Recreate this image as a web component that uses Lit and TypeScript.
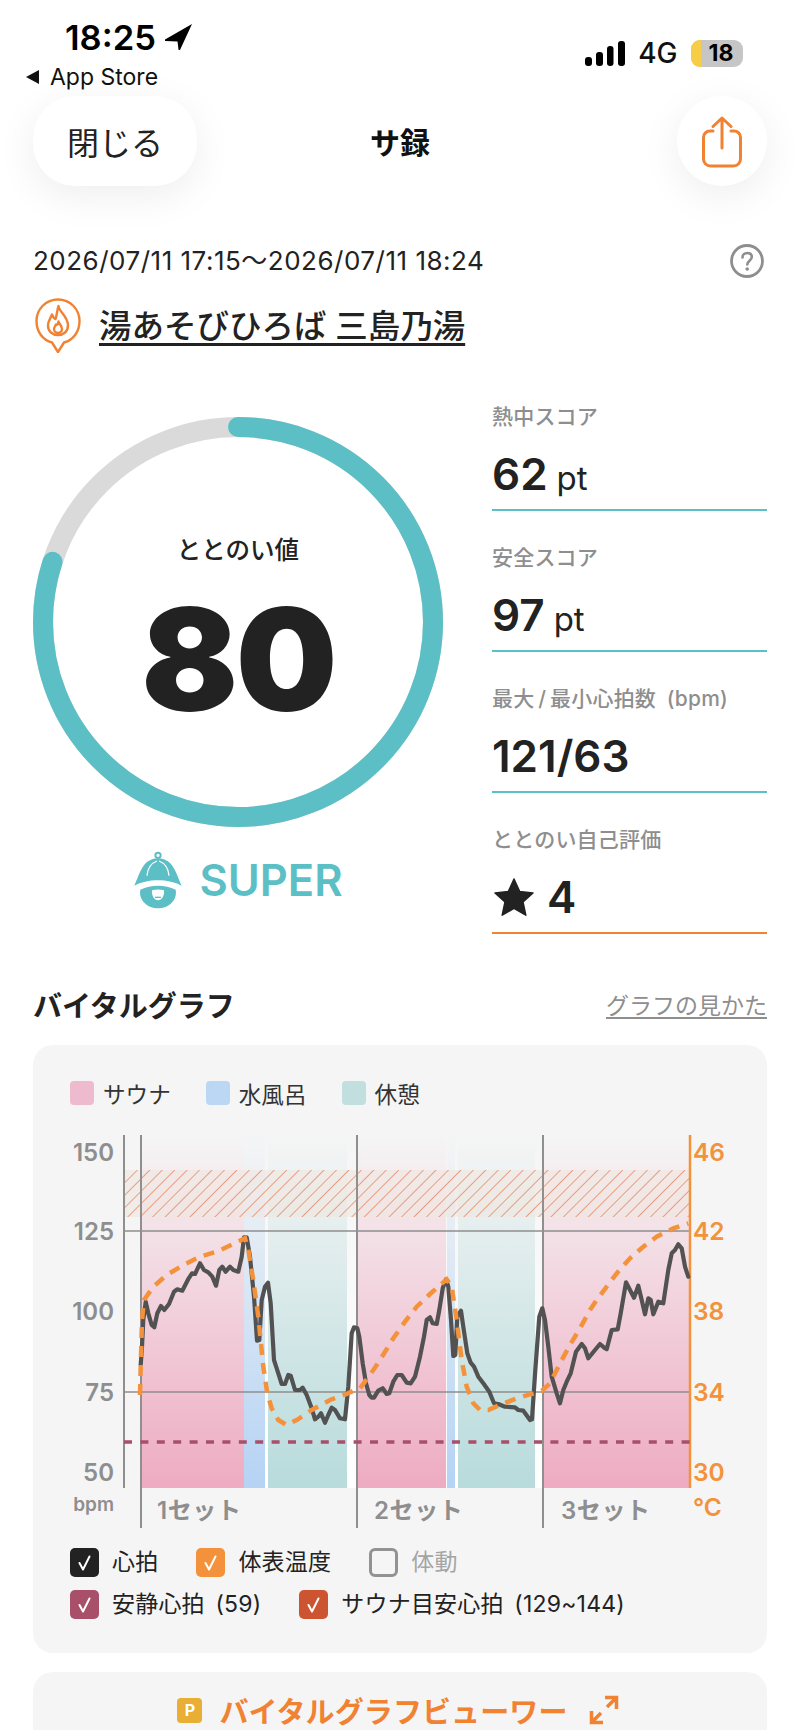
import { LitElement, html, css, svg } from 'lit';
import { customElement } from 'lit/decorators.js';

type Pt = [number, number];

// traces read from the reference, each list in its own crop coordinates
const crop = (pts: Pt[], ox: number, oy: number): Pt[] =>
  pts.map(([x, y]) => [ox + x / 3, oy + y / 3] as Pt);

const HR: Pt[] = [
  ...crop([[32,435],[36,380],[40,300],[47,245],[55,280],[65,315],[73,322],[82,280],[93,258],[103,270],[117,252],[132,215],[142,208],[157,212],[176,175],[186,160],[195,162],[210,130],[222,150],[235,157],[247,170],[258,197],[268,150],[277,140],[287,155],[300,140],[310,150],[325,155],[335,110],[342,52],[350,52],[360,110],[372,230],[381,362],[388,360],[395,240],[405,200],[414,188],[422,250],[432,420],[440,445],[455,492],[465,492],[475,465],[482,467],[495,510],[510,510],[518,503],[530,525],[545,565],[555,598],[565,590],[573,580],[585,608],[595,585],[605,563],[615,570],[630,595],[645,598],[655,500],[665,340],[672,322],[682,325]], 130, 1220),
  ...crop([[28,350],[38,430],[48,490],[58,525],[65,533],[72,533],[85,512],[98,505],[110,522],[118,520],[130,485],[142,465],[155,465],[170,488],[182,490],[195,470],[210,410],[222,350],[230,300],[240,292],[248,310],[260,312],[268,270],[278,205],[288,178],[295,200],[303,300],[310,408],[316,405],[322,290],[333,272],[340,320],[352,400],[362,428],[372,440],[385,470],[400,490],[418,515],[432,550],[445,552],[465,560],[495,562],[505,570],[520,572],[540,600],[546,598],[556,450],[568,290],[577,265],[585,300],[595,380],[605,470],[620,520],[630,550],[640,510],[650,485],[662,460],[678,395],[695,372],[705,385],[715,415]], 350, 1220),
  ...crop([[765,690],[780,672],[795,685],[800,688],[815,630],[833,628],[842,580],[858,487],[870,510],[882,533],[895,497],[905,540],[915,583],[925,535],[932,540],[940,583],[955,545],[970,550],[985,450],[995,400],[1005,390],[1015,373],[1025,385],[1035,440],[1045,470]], 340, 1120),
];

const TEMP: Pt[] = [
  ...crop([[30,525],[32,440],[36,300],[42,240],[70,200],[110,165],[160,135],[210,110],[260,95],[310,72],[345,55],[355,90],[370,180],[385,290],[400,440],[412,520],[425,565],[445,600],[470,615],[500,600],[545,570],[600,540],[650,522]], 130, 1220),
  ...crop([[0,517],[30,505],[60,465],[90,420],[130,355],[165,305],[200,260],[240,222],[290,178],[305,200],[320,300],[335,420],[350,500],[370,550],[390,570],[415,570],[450,555],[500,535],[575,513],[600,490],[630,430],[660,375],[690,325],[720,270]], 350, 1220),
  ...crop([[770,540],[800,500],[830,460],[870,415],[910,380],[950,350],[1000,325],[1045,310]], 340, 1120),
];

const line = (pts: Pt[]) => pts.map(([x, y]) => `${x.toFixed(1)},${y.toFixed(1)}`).join(' ');

const BANDS = [
  { fill: 'url(#sauna)', x: 141, w: 103 },
  { fill: 'url(#water)', x: 244, w: 21 },
  { fill: 'url(#gap)', x: 265, w: 3 },
  { fill: 'url(#rest)', x: 268, w: 79 },
  { fill: 'url(#gap)', x: 347, w: 11 },
  { fill: 'url(#sauna)', x: 358, w: 88 },
  { fill: 'url(#gap)', x: 446, w: 1 },
  { fill: 'url(#water)', x: 447, w: 8 },
  { fill: 'url(#gap)', x: 455, w: 3 },
  { fill: 'url(#rest)', x: 458, w: 77 },
  { fill: 'url(#gap)', x: 535, w: 9 },
  { fill: 'url(#sauna)', x: 544, w: 146 },
];

const STATS = [
  { label: '熱中スコア', value: '62', unit: 'pt' },
  { label: '安全スコア', value: '97', unit: 'pt' },
  { label: '最大\u2009/\u2009最小心拍数 (bpm)', value: '121/63', unit: '' },
];

@customElement('app-root')
export class AppRoot extends LitElement {
  static styles = css`
    :host {
      display: block;
      width: 800px;
      height: 1730px;
      overflow: hidden;
      background: #fff;
      color: #222;
      font-family: Inter, 'Noto Sans CJK JP', sans-serif;
    }
    svg { display: block; }

    .status { display: flex; justify-content: space-between; height: 96px; }
    .status-left { padding: 20px 0 0 25px; }
    .time { display: flex; align-items: center; gap: 9px; margin-left: 40px; height: 34px; font-size: 34.500px; font-weight: 600; color: #000; }
    .back { display: flex; align-items: center; gap: 10px; margin-top: 10px; height: 26px; font-size: 23px; color: #111; }
    .status-right { display: flex; align-items: center; gap: 13.500px; height: 28px; margin: 39px 57px 0 0; }
    .net { font-size: 28px; font-weight: 500; color: #111; }
    .battery { position: relative; display: flex; width: 52px; height: 27px; border-radius: 9px; background: #c6c6c6; overflow: hidden; align-items: center; justify-content: center; font-size: 23px; font-weight: 700; color: #000; }
    .battery-fill { position: absolute; left: 0; top: 0; bottom: 0; width: 10px; background: #f8cd46; }
    .battery span { position: relative; margin-left: 8px; }

    .nav { display: grid; grid-template-columns: 164px 1fr 164px; align-items: center; height: 90px; padding: 0 33px; }
    .close { height: 90px; border-radius: 42px; background: #fff; box-shadow: 0 10px 40px rgba(0, 0, 0, .07); display: flex; align-items: center; justify-content: center; font-size: 32px; color: #222; }
    .nav-title { text-align: center; font-size: 30px; font-weight: 700; color: #111; }
    .share { justify-self: end; width: 90px; height: 90px; border-radius: 50%; background: #fff; box-shadow: 0 10px 40px rgba(0, 0, 0, .07); display: flex; align-items: center; justify-content: center; padding-top: 2px; box-sizing: border-box; }

    .date { display: flex; align-items: center; justify-content: space-between; height: 32px; margin-top: 59px; padding: 0 36px 0 33px; font-size: 26px; letter-spacing: .5px; color: #222; }
    .date-text { margin-top: -5px; }
    .place { display: flex; align-items: center; gap: 18px; height: 55px; margin-top: 21px; padding-left: 35px; }
    .place-name { font-size: 32.500px; font-weight: 500; color: #222; text-decoration: underline; text-decoration-thickness: 3px; text-underline-offset: 5px; margin-top: -4px; }

    .score { display: grid; grid-template-columns: 410px 275px; column-gap: 49px; margin-top: 17px; padding-left: 33px; }
    .ring-col { padding-top: 47px; }
    .ring { display: grid; width: 410px; height: 410px; }
    .ring > * { grid-area: 1 / 1; }
    .ring-text { display: flex; flex-direction: column; align-items: center; justify-content: center; padding-top: 3px; box-sizing: border-box; }
    .ring-label { font-size: 24.500px; font-weight: 500; line-height: 34px; }
    .ring-value { font-size: 143px; font-weight: 900; line-height: 110px; margin-top: 37px; letter-spacing: -2.500px; }
    .level { display: flex; align-items: center; justify-content: center; gap: 14px; margin-top: 24px; margin-left: -2px; color: #5cbfc6; font-size: 43.500px; font-weight: 600; line-height: 57px; }

    .stat { height: 141px; box-sizing: border-box; padding-top: 33px; border-bottom: 2px solid #5cc0c8; }
    .stat.orange { border-bottom-color: #f08232; }
    .stat-label { font-size: 21px; font-weight: 500; line-height: 28px; color: #8e8e8e; letter-spacing: .2px; word-spacing: 5px; }
    .stat-value { display: flex; align-items: baseline; gap: 9px; height: 56px; line-height: 56px; margin-top: 15px; font-size: 44px; font-weight: 600; color: #222; }
    .stat-unit { font-size: 33px; font-weight: 400; }
    .star-row { display: flex; align-items: center; gap: 13px; padding-left: 2px; }

    .section { display: flex; align-items: center; justify-content: space-between; height: 40px; margin-top: 50px; padding: 0 33px; }
    .section-title { font-size: 29px; font-weight: 700; color: #222; }
    .section-link { font-size: 23px; color: #8e8e8e; text-decoration: underline; text-underline-offset: 3px; }

    .card { margin: 0 33px; border-radius: 20px; background: #f5f5f5; }
    .graph { margin-top: 21px; height: 608px; padding-top: 36px; box-sizing: border-box; }
    .legend { display: flex; align-items: center; height: 24px; padding-left: 37px; font-size: 22.600px; color: #333; }
    .legend-item { display: flex; align-items: center; gap: 9px; margin-right: 35px; }
    .swatch { width: 24px; height: 24px; border-radius: 4px; }
    .swatch.sauna { background: #eebacd; }
    .swatch.water { background: #bcd7f4; }
    .swatch.rest { background: #c2dfdf; }
    .chart { margin-top: 20px; }

    .axis-l { font-size: 24px; font-weight: 600; fill: #8e8e8e; text-anchor: end; }
    .axis-r { font-size: 24.500px; font-weight: 600; fill: #f4923c; }
    .unit-l { font-size: 19px; font-weight: 600; fill: #8e8e8e; text-anchor: end; }
    .set { font-size: 24px; font-weight: 600; fill: #8e8e8e; letter-spacing: .6px; }

    .checks { display: flex; flex-direction: column; gap: 13px; margin-top: 13px; padding-left: 37px; font-size: 23px; line-height: 29px; color: #222; }
    .check-row { display: flex; gap: 38px; }
    .check { display: flex; align-items: center; gap: 13px; word-spacing: 4px; letter-spacing: .2px; }
    .check.off { color: #a5a5a5; }
    .box { width: 29px; height: 29px; border-radius: 5px; box-sizing: border-box; }
    .box.black { background: #222; }
    .box.orange { background: #f4923c; }
    .box.plum { background: #a84f6a; }
    .box.rust { background: #cd5430; }
    .box.empty { border: 3px solid #929292; border-radius: 6px; }

    .viewer { display: flex; align-items: center; justify-content: center; gap: 17px; margin-top: 19px; height: 120px; padding: 0 4px 44px 0; box-sizing: border-box; color: #f08232; font-size: 29px; letter-spacing: .1px; font-weight: 600; }
    .viewer-icon { margin-left: 4px; }
    .p-badge { width: 25px; height: 25px; border-radius: 4px; background: #e8ae36; color: #fff; font-size: 16px; font-weight: 700; display: flex; align-items: center; justify-content: center; }
  `;

  private checkMark() {
    return html`<svg width="29" height="29" viewBox="0 0 29 29" fill="none"><path d="M9.500 15l3.500 6.500 6.500-13" stroke="#fff" stroke-width="2" stroke-linecap="round" stroke-linejoin="round"/></svg>`;
  }

  private renderCheck(label: string, color: string) {
    return html`<div class="check"><div class="box ${color}">${this.checkMark()}</div><span>${label}</span></div>`;
  }

  private renderMascot() {
    return html`<svg width="54" height="58" viewBox="38 34 154 174" fill="none">
      <circle cx="115" cy="47" r="8" stroke="#5cbfc6" stroke-width="6"/>
      <path d="M44 138C62 100 68 58 115 56c47 2 53 44 71 82-38-22-104-22-142 0z" fill="#5cbfc6"/>
      <path d="M82 108c2-22 14-38 30-44M148 108c-2-22-14-38-30-44" stroke="#fff" stroke-width="4"/>
      <path d="M40 146c40-24 110-24 150 0" stroke="#fff" stroke-width="5"/>
      <path d="M62 150c32-16 74-16 106 0 6 32-22 56-53 56s-59-24-53-56z" fill="#5cbfc6"/>
      <path d="M97 152c12-3 24-3 36 0 2 16-7 30-18 30s-20-14-18-30z" fill="#fff"/>
      <path d="M106 173h18" stroke="#5cbfc6" stroke-width="4"/>
    </svg>`;
  }

  private renderChart() {
    const left: [string, number][] = [['150', 1152], ['125', 1231], ['100', 1311], ['75', 1392], ['50', 1472]];
    const right: [string, number][] = [['46', 1152], ['42', 1231], ['38', 1311], ['34', 1392], ['30', 1472]];
    return html`<svg class="chart" width="734" height="410" viewBox="33 1125 734 410" fill="none">
      <defs>
        ${[['sauna', '#eeabc2'], ['water', '#b5d3f4'], ['rest', '#b8dbdc'], ['gap', '#ffffff']].map(([id, c]) => svg`
          <linearGradient id=${id} gradientUnits="userSpaceOnUse" x1="0" y1="1135" x2="0" y2="1488">
            <stop offset="0" stop-color=${c} stop-opacity="0"/>
            <stop offset="1" stop-color=${c}/>
          </linearGradient>`)}
        <pattern id="hatch" patternUnits="userSpaceOnUse" width="8.800" height="8.800" patternTransform="rotate(-45)">
          <rect width="8.800" height="8.800" fill="#f0e6e0" fill-opacity=".6"/>
          <line x1="0" y1="0" x2="8.800" y2="0" stroke="#e07a58" stroke-opacity=".75" stroke-width="1.800"/>
        </pattern>
      </defs>
      ${BANDS.map((b) => svg`<rect x=${b.x} y="1135" width=${b.w} height="353" fill=${b.fill}/>`)}
      <rect x="124" y="1170" width="566" height="47" fill="url(#hatch)"/>
      <path d="M124 1231H690M124 1392H690" stroke="#8f8f8f" stroke-width="1.500"/>
      <path d="M124 1135V1488" stroke="#8f8f8f" stroke-width="2"/>
      <path d="M141 1135V1528M357 1135V1528M543 1135V1528" stroke="#8f8f8f" stroke-width="2"/>
      <path d="M690 1135V1488" stroke="#f4923c" stroke-width="2.500"/>
      <path d="M124 1442H690" stroke="#a84f6a" stroke-width="3.500" stroke-dasharray="8 8.400"/>
      <polyline points=${line(HR)} stroke="#525252" stroke-width="4.200" stroke-linejoin="round" stroke-linecap="round"/>
      <polyline points=${line(TEMP)} stroke="#f4923c" stroke-width="4.500" stroke-dasharray="11 8"/>
      ${left.map(([t, y]) => svg`<text class="axis-l" x="114" y=${y + 9}>${t}</text>`)}
      ${right.map(([t, y]) => svg`<text class="axis-r" x="693" y=${y + 9}>${t}</text>`)}
      <text class="unit-l" x="114" y="1511">bpm</text>
      <text class="axis-r" x="693" y="1516">°C</text>
      <text class="set" x="157" y="1519">1セット</text>
      <text class="set" x="374" y="1519">2セット</text>
      <text class="set" x="561" y="1519">3セット</text>
    </svg>`;
  }

  render() {
    return html`
      <div class="status">
        <div class="status-left">
          <div class="time">
            <span>18:25</span>
            <svg width="27" height="26" viewBox="0 0 27 26"><path d="M27 0L0 15.500c-.8.6-.4 1.600.5 1.600L12.500 17.500 13.500 25.500c.2 1 1.200 1 1.600.2z" fill="#000"/></svg>
          </div>
          <div class="back">
            <svg width="15" height="14" viewBox="0 0 15 14"><path d="M14 0v14L1 7z" fill="#111"/></svg>
            <span>App Store</span>
          </div>
        </div>
        <div class="status-right">
          <svg width="40" height="25" viewBox="0 0 40 25" fill="#000">
            <rect x="0" y="16" width="7" height="9" rx="3"/>
            <rect x="11" y="11" width="7" height="14" rx="3"/>
            <rect x="22" y="5" width="6.500" height="20" rx="3"/>
            <rect x="33" y="0" width="7" height="25" rx="3"/>
          </svg>
          <span class="net">4G</span>
          <div class="battery"><div class="battery-fill"></div><span>18</span></div>
        </div>
      </div>

      <div class="nav">
        <div class="close">閉じる</div>
        <div class="nav-title">サ録</div>
        <div class="share">
          <svg width="40" height="52" viewBox="0 0 40 52" fill="none" stroke="#f08232" stroke-width="3" stroke-linecap="round" stroke-linejoin="round">
            <path d="M20 2V32M11 10.500L20 2l9 8.500"/>
            <path d="M11 15H8a6.500 6.500 0 0 0-6.500 6.500V43a7 7 0 0 0 7 7h23a7 7 0 0 0 7-7V21.500A6.500 6.500 0 0 0 32 15h-3"/>
          </svg>
        </div>
      </div>

      <div class="date">
        <span class="date-text">2026/07/11 17:15～2026/07/11 18:24</span>
        <svg width="34" height="34" viewBox="0 0 34 34" fill="none">
          <circle cx="17" cy="17" r="15.500" stroke="#8e8e8e" stroke-width="2.800"/>
          <path d="M12.500 13.500c0-2.800 2-4.500 4.700-4.500s4.600 1.600 4.600 4c0 3.600-4.500 3.800-4.500 7.500" stroke="#8e8e8e" stroke-width="2.600" stroke-linecap="round"/>
          <circle cx="17.200" cy="25" r="1.800" fill="#8e8e8e"/>
        </svg>
      </div>

      <div class="place">
        <svg width="46" height="55" viewBox="0 0 46 55" fill="none" stroke="#f08232" stroke-width="2.400" stroke-linejoin="round">
          <path d="M17 44.500C7.500 42 1.500 33.500 1.500 23 1.500 11 11 1.500 23 1.500S44.500 11 44.500 23c0 10.500-6 19-15.500 21.500L23 54z"/>
          <path d="M23.500 8c.5 6 9.500 10 9.500 19.500C33 33.500 28.500 37 23 37s-10-3.500-10-9.500c0-4.500 2.500-7 4-11 1 2.500 2 4 3.500 4.500C22 17 22 12.500 23.500 8z"/>
          <path d="M23.500 23.500c.5 2.500 3.500 4 3.500 7.500 0 2.500-2 4-4 4s-4-1.500-4-4c0-2 1.500-3 2-4.500 1 .5 2 0 2.500-3z"/>
        </svg>
        <span class="place-name">湯あそびひろば 三島乃湯</span>
      </div>

      <div class="score">
        <div class="ring-col">
          <div class="ring">
            <svg width="410" height="410" viewBox="0 0 410 410" fill="none">
              <circle cx="205" cy="205" r="195" stroke="#dadada" stroke-width="20"/>
              <circle cx="205" cy="205" r="195" stroke="#5cbfc6" stroke-width="20" stroke-linecap="round" pathLength="100" stroke-dasharray="80 100" transform="rotate(-90 205 205)"/>
            </svg>
            <div class="ring-text">
              <div class="ring-label">ととのい値</div>
              <div class="ring-value">80</div>
            </div>
          </div>
          <div class="level">${this.renderMascot()}<span>SUPER</span></div>
        </div>
        <div class="stats">
          ${STATS.map((s) => html`
            <div class="stat">
              <div class="stat-label">${s.label}</div>
              <div class="stat-value"><span>${s.value}</span>${s.unit ? html`<span class="stat-unit">${s.unit}</span>` : ''}</div>
            </div>`)}
          <div class="stat orange">
            <div class="stat-label">ととのい自己評価</div>
            <div class="stat-value star-row">
              <svg width="40" height="38" viewBox="0 0 40 38"><path d="M20 1l5.600 12.400 13.400 1.500-10 9 2.800 13.300L20 30.400 8.200 37.200 11 23.900 1 14.900l13.400-1.500z" fill="#222" stroke="#222" stroke-width="1.500" stroke-linejoin="round"/></svg>
              <span>4</span>
            </div>
          </div>
        </div>
      </div>

      <div class="section">
        <span class="section-title">バイタルグラフ</span>
        <span class="section-link">グラフの見かた</span>
      </div>

      <div class="card graph">
        <div class="legend">
          <div class="legend-item"><div class="swatch sauna"></div><span>サウナ</span></div>
          <div class="legend-item"><div class="swatch water"></div><span>水風呂</span></div>
          <div class="legend-item"><div class="swatch rest"></div><span>休憩</span></div>
        </div>
        ${this.renderChart()}
        <div class="checks">
          <div class="check-row">
            ${this.renderCheck('心拍', 'black')}
            ${this.renderCheck('体表温度', 'orange')}
            <div class="check off"><div class="box empty"></div><span>体動</span></div>
          </div>
          <div class="check-row">
            ${this.renderCheck('安静心拍 (59)', 'plum')}
            ${this.renderCheck('サウナ目安心拍 (129~144)', 'rust')}
          </div>
        </div>
      </div>

      <div class="card viewer">
        <div class="p-badge">P</div>
        <span>バイタルグラフビューワー</span>
        <svg class="viewer-icon" width="30" height="30" viewBox="0 0 30 30" fill="none" stroke="#f08232" stroke-width="3.500">
          <path d="M2.500 27.500L12 18M2.500 16V27.500H14M18 12L27.500 2.500M16 2.500H27.500V14"/>
        </svg>
      </div>
    `;
  }
}
